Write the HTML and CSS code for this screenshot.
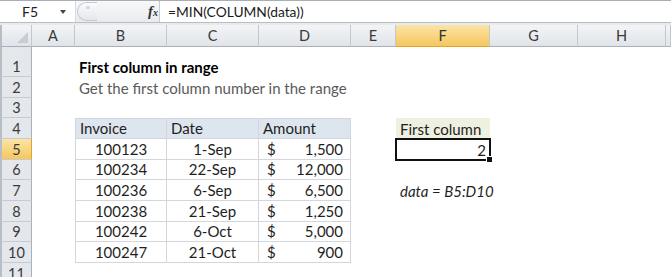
FILE: index.html
```html
<!DOCTYPE html>
<html>
<head>
<meta charset="utf-8">
<link rel="stylesheet" href="styles.css">
</head>
<body>
<div class="app">
  <div class="fbar">
    <div class="namebox"><span class="ref">F5</span><span class="dd"></span></div>
    <div class="fbtns"><span class="pill"><span class="dot"></span></span><span class="fx"><i>f</i><span class="fxx">x</span></span></div>
    <div class="formula">=MIN(COLUMN(data))</div>
  </div>
  <div class="gap"></div>
  <div class="grid">
    <div class="ch corner"></div>
    <div class="ch">A</div><div class="ch">B</div><div class="ch">C</div><div class="ch">D</div><div class="ch">E</div><div class="ch sel">F</div><div class="ch">G</div><div class="ch">H</div><div class="ch"></div>

    <div class="rh">1</div><div></div><div class="c title">First column in range</div><div></div><div></div><div></div><div></div><div></div><div></div><div></div>

    <div class="rh">2</div><div></div><div class="c sub">Get the first column number in the range</div><div></div><div></div><div></div><div></div><div></div><div></div><div></div>

    <div class="rh">3</div><div></div><div></div><div></div><div></div><div></div><div></div><div></div><div></div><div></div>

    <div class="rh">4</div><div></div><div class="c t th tl">Invoice</div><div class="c t th">Date</div><div class="c t th">Amount</div><div></div><div class="c lbl">First column</div><div></div><div></div><div></div>

    <div class="rh rsel">5</div><div></div><div class="c t tl ctr">100123</div><div class="c t ctr">1-Sep</div><div class="c t amt"><span>$</span><span>1,500</span></div><div></div><div class="c res">2</div><div></div><div></div><div></div>

    <div class="rh">6</div><div></div><div class="c t tl ctr">100234</div><div class="c t ctr">22-Sep</div><div class="c t amt"><span>$</span><span>12,000</span></div><div></div><div></div><div></div><div></div><div></div>

    <div class="rh">7</div><div></div><div class="c t tl ctr">100236</div><div class="c t ctr">6-Sep</div><div class="c t amt"><span>$</span><span>6,500</span></div><div></div><div class="c note">data = B5:D10</div><div></div><div></div><div></div>

    <div class="rh">8</div><div></div><div class="c t tl ctr">100238</div><div class="c t ctr">21-Sep</div><div class="c t amt"><span>$</span><span>1,250</span></div><div></div><div></div><div></div><div></div><div></div>

    <div class="rh">9</div><div></div><div class="c t tl ctr">100242</div><div class="c t ctr">6-Oct</div><div class="c t amt"><span>$</span><span>5,000</span></div><div></div><div></div><div></div><div></div><div></div>

    <div class="rh">10</div><div></div><div class="c t tl ctr">100247</div><div class="c t ctr">21-Oct</div><div class="c t amt"><span>$</span><span>900</span></div><div></div><div></div><div></div><div></div><div></div>

    <div class="rh">11</div><div></div><div></div><div></div><div></div><div></div><div></div><div></div><div></div><div></div>
  </div>
</div>
</body>
</html>
```
FILE: styles.css
```css
* { box-sizing: border-box; margin: 0; padding: 0; }
html, body { background: #fff; }
body {
  margin: 0;
  width: 671px;
  height: 277px;
  overflow: hidden;
  font-family: Lato, "Open Sans", sans-serif;
  color: #1f1f1f;
}
.app { width: 671px; }

/* formula bar */
.fbar {
  display: flex;
  height: 23px;
  border-top: 1px solid #a9aeb5;
  border-bottom: 1px solid #b9bec6;
  background: #fff;
}
.namebox {
  width: 76px;
  display: flex;
  align-items: center;
  position: relative;
  border-right: 1px solid #d6dae0;
}
.ref {
  font-size: 14px;
  margin-left: 22px;
  color: #222;
}
.dd {
  position: absolute;
  left: 60px;
  top: 9px;
  border-left: 3.5px solid transparent;
  border-right: 3.5px solid transparent;
  border-top: 4px solid #444;
}
.fbtns {
  width: 84px;
  display: flex;
  align-items: center;
  background: linear-gradient(#f7f8f9, #e9ecef);
  border-right: 1px solid #c6cbd2;
}
.pill {
  width: 20px;
  height: 19px;
  margin-left: 1px;
  border: 1px solid #c4c9d0;
  border-right: none;
  border-radius: 10px 0 0 10px;
  background: linear-gradient(#fbfbfc, #e4e7eb);
  position: relative;
}
.dot {
  position: absolute;
  left: 8px;
  top: 3px;
  width: 4px;
  height: 3px;
  border-radius: 2px;
  background: #d2d6dc;
}
.fx {
  margin-left: 51px;
  font-family: "Liberation Serif", serif;
  font-size: 15px;
  color: #333;
  line-height: 1;
}
.fx i { font-style: italic; font-weight: bold; }
.fxx { font-style: italic; font-size: 10px; font-weight: bold; }
.formula {
  flex: 1;
  display: flex;
  align-items: center;
  padding-left: 8px;
  font-size: 13.8px;
  color: #1a1a1a;
}
.gap {
  height: 2px;
  background: #e8eaed;
}

/* grid */
.grid {
  display: grid;
  grid-template-columns: 32px 43px 92px 92px 92px 45px 94px 88px 88px 1fr;
  grid-template-rows: 22px 30px;
  grid-auto-rows: 20.67px;
  font-size: 15px;
}
.ch {
  background: linear-gradient(#f3f4f6, #e0e4e9);
  border-right: 1px solid #c3c8cf;
  border-bottom: 1px solid #a9b0ba;
  display: flex;
  align-items: center;
  justify-content: center;
  color: #3a3a3a;
  font-size: 14.5px;
}
.ch.corner {
  position: relative;
  border-left: 2px solid #b9bec5;
}
.ch.corner::after {
  content: "";
  position: absolute;
  right: 3px;
  bottom: 3px;
  width: 0;
  height: 0;
  border-left: 11px solid transparent;
  border-bottom: 11px solid #c9cdd3;
}
.ch.sel {
  background: linear-gradient(#fbe4a6, #f5c75f);
  border-bottom: 1px solid #e0a52e;
  color: #333;
}
.rh {
  background: #e4e7ec;
  border-right: 1px solid #a9b0ba;
  border-bottom: 1px solid #c6cbd2;
  border-left: 2px solid #b9bec5;
  display: flex;
  align-items: flex-end;
  justify-content: center;
  padding-bottom: 1px;
  color: #3a3a3a;
  font-size: 14.5px;
  line-height: 17px;
}
.rh.rsel {
  background: linear-gradient(#fbe4a6, #f5c75f);
  border-right: 1px solid #e0a52e;
}

.c {
  display: flex;
  align-items: flex-end;
  padding: 0 4px 1px;
  white-space: nowrap;
  overflow: visible;
  line-height: 17px;
}
.title { font-weight: bold; color: #000; }
.sub { color: #5a5a5a; }
.t {
  border-right: 1px solid #d3d7dd;
  border-bottom: 1px solid #d3d7dd;
}
.tl { border-left: 1px solid #d3d7dd; }
.th {
  background: #dde5ee;
  border-top: 1px solid #d3d7dd;
}
.ctr { justify-content: center; }
.amt { justify-content: space-between; padding-left: 8px; padding-right: 7px; }
.lbl { background: #eef0e0; }
.res {
  justify-content: flex-end;
  position: relative;
}
.res::before {
  content: "";
  position: absolute;
  left: -1px;
  top: -1px;
  right: -1px;
  bottom: -1px;
  border: 2px solid #111;
}
.res::after {
  content: "";
  position: absolute;
  right: -3px;
  bottom: -3px;
  width: 5px;
  height: 5px;
  background: #111;
  border: 1px solid #fff;
}
.note { font-style: italic; }
```
